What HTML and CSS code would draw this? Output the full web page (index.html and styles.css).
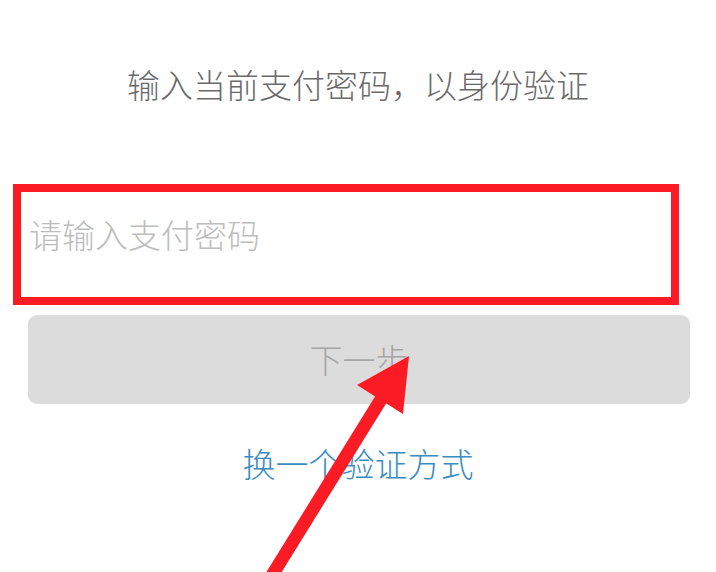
FILE: index.html
```html
<!DOCTYPE html>
<html lang="zh">
<head>
<meta charset="utf-8">
<title>输入支付密码</title>
<link rel="stylesheet" href="styles.css">
</head>
<body>
<div class="page">
  <h1 class="title">输入当前支付密码，以身份验证</h1>
  <div class="field-highlight">
    <div class="field">请输入支付密码</div>
  </div>
  <div class="next-btn">下一步</div>
  <div class="switch-link">换一个验证方式</div>
  <svg class="arrow" width="716" height="572" viewBox="0 0 716 572" xmlns="http://www.w3.org/2000/svg">
    <line x1="266" y1="585" x2="388" y2="388" stroke="#fb1b24" stroke-width="13"/>
    <polygon points="409,356 357,385 403,414" fill="#fb1b24"/>
  </svg>
</div>
</body>
</html>
```
FILE: styles.css
```css
html, body {
  margin: 0;
  padding: 0;
  background: #ffffff;
}
.page {
  position: relative;
  width: 716px;
  height: 572px;
  overflow: hidden;
  font-family: "Noto Sans CJK SC", "Noto Sans", sans-serif;
  font-weight: 300;
  display: flex;
  flex-direction: column;
}
.title {
  margin: 64px 0 0 0;
  font-size: 33px;
  line-height: 40px;
  font-weight: 300;
  color: #6a6a6a;
  text-align: center;
  padding-left: 0;
}
.field-highlight {
  margin: 80px 0 0 13px;
  width: 666px;
  height: 121px;
  box-sizing: border-box;
  border: 8px solid #fb1b24;
  padding: 22px 0 0 8px;
}
.field {
  font-size: 33px;
  line-height: 40px;
  color: #bdbdbd;
}
.next-btn {
  margin: 10px 0 0 28px;
  width: 662px;
  height: 89px;
  border-radius: 9px;
  background: #dcdcdc;
  color: #a6a6a6;
  font-size: 33px;
  display: flex;
  align-items: center;
  justify-content: center;
  box-sizing: border-box;
  padding-bottom: 2px;
}
.switch-link {
  margin-top: 39px;
  font-size: 33px;
  line-height: 40px;
  color: #3a8cc2;
  text-align: center;
}
.arrow {
  position: absolute;
  left: 0;
  top: 0;
}
```
